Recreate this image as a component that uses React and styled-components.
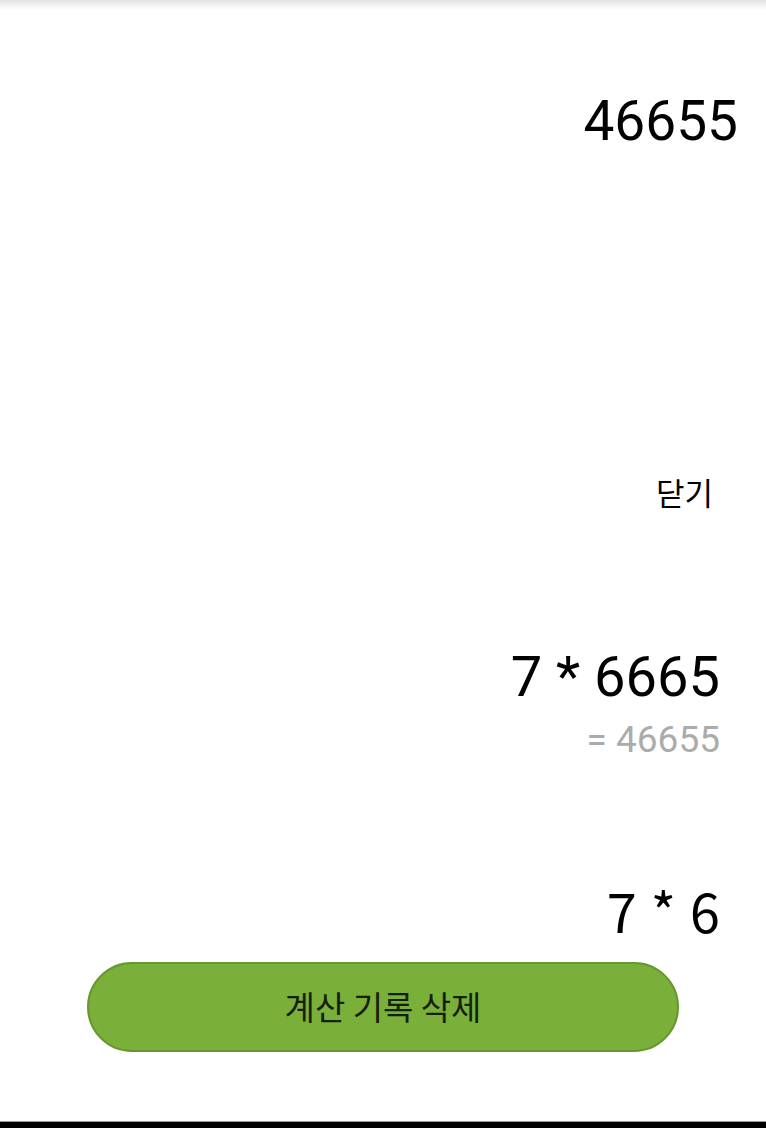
import React from "react";
import styled, { createGlobalStyle } from "styled-components";

const GlobalStyle = createGlobalStyle`
  html, body {
    margin: 0;
    padding: 0;
    background: #ffffff;
  }
  * {
    box-sizing: border-box;
  }
`;

const Screen = styled.div`
  width: 766px;
  height: 1128px;
  display: flex;
  flex-direction: column;
  background: #ffffff;
  overflow: hidden;
  font-family: Roboto, "Noto Sans CJK KR", sans-serif;
`;

const TopShadow = styled.div`
  height: 10px;
  flex-shrink: 0;
  background: linear-gradient(#e2e2e2, rgba(255, 255, 255, 0));
`;

const Result = styled.div`
  margin-top: 83px;
  padding-right: 28px;
  text-align: right;
  font-size: 55px;
  line-height: 56px;
  color: #000;
`;

const CloseRow = styled.div`
  margin-top: 327px;
  display: flex;
  justify-content: flex-end;
  padding-right: 53px;
`;

const CloseButton = styled.button`
  all: unset;
  cursor: pointer;
  font-family: "Noto Sans CJK KR", sans-serif;
  font-size: 31px;
  line-height: 31px;
  color: #000;
`;

const History = styled.ul`
  list-style: none;
  margin: 143px 0 0;
  padding: 0 46px 0 0;
  display: flex;
  flex-direction: column;
  align-items: flex-end;
  gap: 126px;
`;

const Entry = styled.li`
  display: flex;
  flex-direction: column;
  align-items: flex-end;
`;

const Expression = styled.div`
  font-family: ${(p) => (p.$alt ? '"Noto Sans CJK KR", sans-serif' : "Roboto, sans-serif")};
  font-size: ${(p) => (p.$alt ? "54px" : "56px")};
  line-height: ${(p) => (p.$alt ? "52px" : "54px")};
  word-spacing: ${(p) => (p.$alt ? "2px" : "0")};
  color: #000;
`;

const Answer = styled.div`
  margin-top: 18px;
  font-size: 37px;
  line-height: 36px;
  color: #ababab;
`;

const ClearWrap = styled.div`
  margin-top: 26px;
  padding-left: 87px;
`;

const ClearButton = styled.button`
  width: 592px;
  height: 90px;
  border-radius: 45px;
  border: 2px solid #67962f;
  background: #7aaf3a;
  color: #152008;
  font-family: "Noto Sans CJK KR", sans-serif;
  font-size: 33px;
  display: flex;
  align-items: center;
  justify-content: center;
  padding: 0 0 2px;
  cursor: pointer;
`;

const NavBar = styled.div`
  margin-top: auto;
  height: 7px;
  background: #000;
  border-top: 1px solid #9a9a9a;
`;

const history = [
  { id: 1, expr: "7 * 6665", result: "= 46655" },
  { id: 2, expr: "7 * 6", alt: true },
];

export default function App() {
  return (
    <>
      <GlobalStyle />
      <Screen>
        <TopShadow />
        <Result>46655</Result>
        <CloseRow>
          <CloseButton>닫기</CloseButton>
        </CloseRow>
        <History>
          {history.map((item) => (
            <Entry key={item.id}>
              <Expression $alt={item.alt}>{item.expr}</Expression>
              {item.result && <Answer>{item.result}</Answer>}
            </Entry>
          ))}
        </History>
        <ClearWrap>
          <ClearButton>계산 기록 삭제</ClearButton>
        </ClearWrap>
        <NavBar />
      </Screen>
    </>
  );
}
